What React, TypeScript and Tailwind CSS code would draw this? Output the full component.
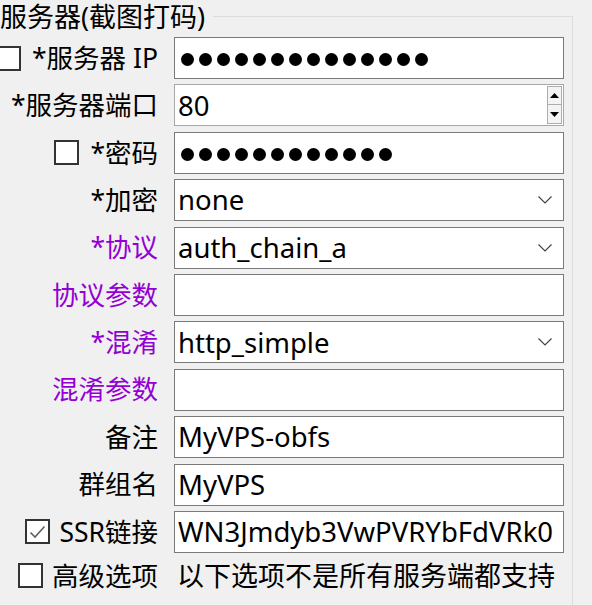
import React from "react";

// ---- Pieces ---------------------------------------------------------------

const PURPLE = "text-[#9400d3]";

function CheckBox({ checked = false }: { checked?: boolean }) {
  return (
    <span className="flex h-[25px] w-[25px] shrink-0 items-center justify-center border-2 border-[#333] bg-white">
      {checked ? (
        <svg width="17" height="14" viewBox="0 0 17 14" aria-hidden>
          <polyline
            points="1.5,7.5 6,12 15.5,1.5"
            fill="none"
            stroke="#606060"
            strokeWidth="1.6"
          />
        </svg>
      ) : null}
    </span>
  );
}

function Dots({ count }: { count: number }) {
  return (
    <div className="mt-[3px] flex items-center gap-[5px] pl-[6px]">
      {Array.from({ length: count }).map((_, i) => (
        <span key={i} className="h-[13px] w-[13px] rounded-full bg-black" />
      ))}
    </div>
  );
}

function Chevron() {
  return (
    <svg width="14" height="8" viewBox="0 0 14 8" className="shrink-0" aria-hidden>
      <polyline points="0.5,0.5 7,7 13.5,0.5" fill="none" stroke="#444" strokeWidth="1.2" />
    </svg>
  );
}

function SpinButtons() {
  return (
    <div className="flex h-full flex-col py-[1px] pr-[1px]">
      <span className="flex h-[19px] w-[15px] items-center justify-center border border-[#adadad] bg-[#f4f4f4]">
        <svg width="9" height="5" viewBox="0 0 9 5" aria-hidden>
          <polygon points="4.5,0 9,5 0,5" fill="#000" />
        </svg>
      </span>
      <span className="flex h-[19px] w-[15px] items-center justify-center border border-t-0 border-[#adadad] bg-[#f4f4f4]">
        <svg width="9" height="5" viewBox="0 0 9 5" aria-hidden>
          <polygon points="0,0 9,0 4.5,5" fill="#000" />
        </svg>
      </span>
    </div>
  );
}

type Row = {
  label: string;
  purple?: boolean;
  checkbox?: boolean;
  checked?: boolean;
  gap?: string;
  field: React.ReactNode;
  fieldClass?: string;
};

// text inside a box; Segoe in the original runs a little wider than Noto Sans
function Text({ children, className = "" }: { children?: React.ReactNode; className?: string }) {
  return (
    <span className={`whitespace-nowrap pl-[3px] text-[27.5px] leading-none ${className}`}>{children}</span>
  );
}

const ROWS: Row[] = [
  { label: "*服务器 IP", checkbox: true, field: <Dots count={14} /> },
  {
    label: "*服务器端口",
    fieldClass: "border-[#a8a8a8] justify-between",
    field: (
      <>
        <Text className="pl-[1px]">80</Text>
        <SpinButtons />
      </>
    ),
  },
  { label: "*密码", checkbox: true, field: <Dots count={12} /> },
  {
    label: "*加密",
    fieldClass: "justify-between pr-[11px]",
    field: (
      <>
        <Text>none</Text>
        <Chevron />
      </>
    ),
  },
  {
    label: "*协议",
    purple: true,
    fieldClass: "justify-between pr-[11px]",
    field: (
      <>
        <Text>auth_chain_a</Text>
        <Chevron />
      </>
    ),
  },
  { label: "协议参数", purple: true, field: null },
  {
    label: "*混淆",
    purple: true,
    fieldClass: "justify-between pr-[11px]",
    field: (
      <>
        <Text>http_simple</Text>
        <Chevron />
      </>
    ),
  },
  { label: "混淆参数", purple: true, field: null },
  { label: "备注", field: <Text>MyVPS-obfs</Text> },
  { label: "群组名", field: <Text>MyVPS</Text> },
  {
    label: "SSR链接",
    checkbox: true,
    checked: true,
    gap: "gap-[9px]",
    fieldClass: "bg-[#f0f0f0] overflow-hidden",
    field: <Text className="pl-[1px]">WN3Jmdyb3VwPVRYbFdVRk0</Text>,
  },
];

// ---- Page -----------------------------------------------------------------

export default function App() {
  return (
    <div
      className="h-[605px] w-[592px] overflow-hidden bg-[#f0f0f0] text-[27px] text-black"
      style={{ fontFamily: '"Noto Sans", "Noto Sans CJK SC", sans-serif' }}
    >
      <div className="w-[573px]">
        {/* group box caption + top edge */}
        <div className="flex h-[37px] items-start">
          <span className="whitespace-nowrap leading-[34px]">服务器(截图打码)</span>
          <div className="ml-[8px] mt-[16px] flex-1 self-stretch border-r border-t border-[#dcdcdc]" />
        </div>

        <div className="flex h-[568px] flex-col border-r border-[#dcdcdc]">
          <div className="flex flex-col gap-[5.4px]">
            {ROWS.map((r) => (
              <div key={r.label} className="flex h-[42px] items-center">
                <div className={`flex w-[158px] shrink-0 items-center justify-end ${r.gap ?? "gap-[11px]"}`}>
                  {r.checkbox ? <CheckBox checked={r.checked} /> : null}
                  <span className={`whitespace-nowrap text-[26.5px] leading-none ${r.purple ? PURPLE : ""}`}>
                    {r.label}
                  </span>
                </div>
                <div
                  className={`ml-[16px] flex h-[42px] w-[390px] items-center border bg-white ${
                    r.fieldClass ?? ""
                  } ${r.fieldClass?.includes("border-[") ? "" : "border-[#7a7a7a]"}`}
                >
                  {r.field}
                </div>
              </div>
            ))}
          </div>

          <div className="mt-[2px] flex h-[42px] items-center">
            <div className="flex w-[158px] shrink-0 items-center justify-end gap-[9px]">
              <CheckBox />
              <span className="whitespace-nowrap text-[26.5px] leading-none">高级选项</span>
            </div>
            <span className="ml-[19px] whitespace-nowrap leading-none">以下选项不是所有服务端都支持</span>
          </div>
        </div>
      </div>
    </div>
  );
}
